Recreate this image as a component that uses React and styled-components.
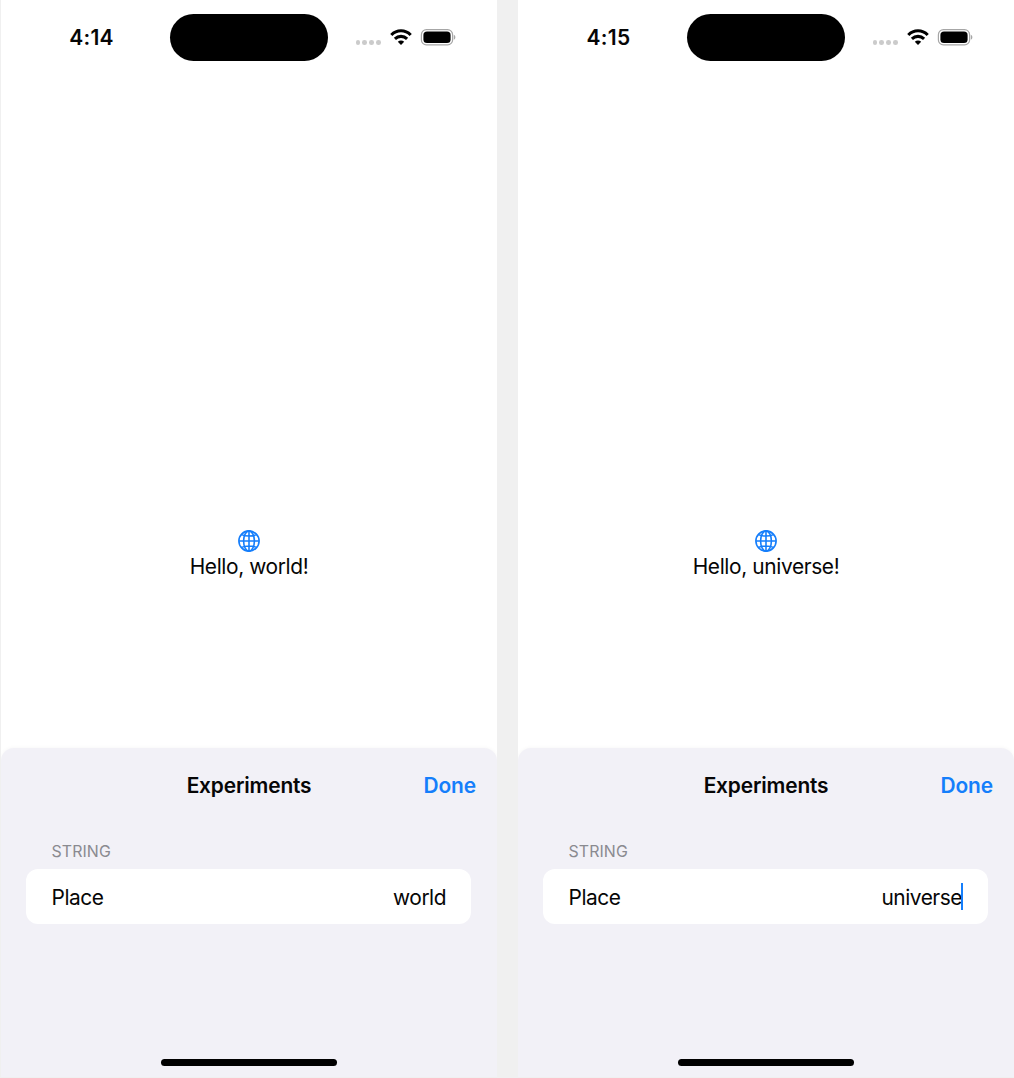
import React from "react";
import styled, { createGlobalStyle } from "styled-components";

const GlobalStyle = createGlobalStyle`
  *, *::before, *::after { box-sizing: border-box; }
  body {
    margin: 0;
    background: #f0f0f0;
    color: #060606;
    font-family: Inter, "Liberation Sans", sans-serif;
    font-size: 20.9px;
    line-height: 26px;
  }
`;

const Gallery = styled.main`
  display: flex;
  gap: 21px;
  width: 1014px;
  height: 1078px;
  padding: 0 0 1px 1px;
  overflow: hidden;
`;

const Phone = styled.section`
  display: flex;
  flex-direction: column;
  flex: 0 0 496px;
  background: #fff;
`;

const StatusBar = styled.header`
  display: grid;
  grid-template-columns: 169px 158px 169px;
  align-items: center;
  height: 75px;
`;

const Clock = styled.time`
  padding-left: 12px;
  text-align: center;
  font-size: 21px;
  font-weight: 600;
  letter-spacing: 0.25px;
`;

const Island = styled.div`
  height: 47px;
  border-radius: 24px;
  background: #000;
`;

const Indicators = styled.div`
  display: flex;
  align-items: center;
  padding: 0 0 1px 27px;
`;

const SignalDots = styled.div`
  display: flex;
  gap: 2.2px;
  margin: 11.5px 9px 0 0.5px;
`;

const Dot = styled.i`
  width: 4.7px;
  height: 4.7px;
  border-radius: 50%;
  background: #cbcbcb;
`;

const WifiGlyph = styled.svg`
  width: 22px;
  height: 16px;
  margin-right: 8px;
`;

const BatteryGlyph = styled.svg`
  width: 36px;
  height: 17px;
`;

const Greeting = styled.div`
  display: flex;
  flex: 1;
  flex-direction: column;
  align-items: center;
  padding-top: 455px;
`;

const GlobeGlyph = styled.svg`
  width: 22px;
  height: 22px;
  margin-bottom: 2px;
`;

const Message = styled.p`
  margin: 0;
  letter-spacing: -0.38px;
`;

const Sheet = styled.section`
  display: flex;
  flex-direction: column;
  height: 329px;
  border-radius: 13px 13px 0 0;
  background: #f2f1f7;
  box-shadow: 0 0 4px rgba(0, 0, 0, 0.045);
  clip-path: inset(-6px 0 0 0);
`;

const SheetHeader = styled.div`
  display: grid;
  grid-template-columns: 1fr auto 1fr;
  align-items: center;
  height: 74px;
  padding: 1px 21px 0;
`;

const Title = styled.h2`
  grid-column: 2;
  margin: 0;
  font-size: 20.9px;
  font-weight: 600;
  letter-spacing: -0.16px;
`;

const DoneButton = styled.button`
  justify-self: end;
  padding: 0;
  border: 0;
  background: none;
  color: #157efb;
  font: inherit;
  font-weight: 600;
  letter-spacing: -0.1px;
`;

const SectionLabel = styled.h3`
  margin: 20px 51px 7px 50.5px;
  color: #8a8a90;
  font-size: 15.9px;
  font-weight: 400;
  line-height: 20px;
  letter-spacing: 0.1px;
`;

const Field = styled.label`
  display: flex;
  align-items: center;
  justify-content: space-between;
  height: 55px;
  margin: 0 26px 0 25px;
  padding: 3px 25px 0 25.5px;
  border-radius: 12px;
  background: #fff;
`;

const FieldName = styled.span`
  letter-spacing: -0.45px;
`;

const FieldValue = styled.span`
  display: flex;
  align-items: center;
  letter-spacing: -0.48px;
`;

const Caret = styled.i`
  width: 2px;
  height: 27px;
  margin: -4px 0 0 -1px;
  background: #157efb;
`;

const HomeIndicator = styled.div`
  width: 176px;
  height: 7px;
  margin: auto auto 11px;
  border-radius: 4px;
  background: #000;
`;

function Wifi() {
  return (
    <WifiGlyph viewBox="0 0 22 16" fill="none" stroke="#000" strokeWidth="3.1">
      <path d="M1.3 6C6.8.4 15.2.4 20.7 6" />
      <path d="M4.9 9.8C8.4 6.5 13.6 6.5 17.1 9.8" />
      <path d="M11 16 7.8 12.8C9.6 11.1 12.4 11.1 14.2 12.8Z" fill="#000" stroke="none" />
    </WifiGlyph>
  );
}

function Battery() {
  return (
    <BatteryGlyph viewBox="0 0 36 17">
      <rect x="1.4" y=".7" width="31.2" height="15.2" rx="5" fill="none" stroke="#a6a6a6" strokeWidth="1.2" />
      <rect x="3.4" y="2.5" width="27.2" height="11.6" rx="3.6" fill="#000" />
      <path d="M33.8 5.8v5c2.1-.8 2.1-4.2 0-5Z" fill="#a6a6a6" />
    </BatteryGlyph>
  );
}

function Globe() {
  return (
    <GlobeGlyph viewBox="0 0 22 22" fill="none" stroke="#157efb" strokeWidth="1.6">
      <circle cx="11" cy="11" r="10.1" />
      <ellipse cx="11" cy="11" rx="5.4" ry="10.1" />
      <path d="M11 .9v20.2M.9 11h20.2M3.6 4.6C7.4 6.5 14.6 6.5 18.4 4.6M3.6 17.4C7.4 15.5 14.6 15.5 18.4 17.4" />
    </GlobeGlyph>
  );
}

const screens = [
  { time: "4:14", place: "world", editing: false },
  { time: "4:15", place: "universe", editing: true },
];

function Screen({ time, place, editing }) {
  return (
    <Phone>
      <StatusBar>
        <Clock>{time}</Clock>
        <Island />
        <Indicators>
          <SignalDots>
            <Dot />
            <Dot />
            <Dot />
            <Dot />
          </SignalDots>
          <Wifi />
          <Battery />
        </Indicators>
      </StatusBar>
      <Greeting>
        <Globe />
        <Message>Hello, {place}!</Message>
      </Greeting>
      <Sheet>
        <SheetHeader>
          <Title>Experiments</Title>
          <DoneButton type="button">Done</DoneButton>
        </SheetHeader>
        <SectionLabel>STRING</SectionLabel>
        <Field>
          <FieldName>Place</FieldName>
          <FieldValue>
            {place}
            {editing && <Caret />}
          </FieldValue>
        </Field>
        <HomeIndicator />
      </Sheet>
    </Phone>
  );
}

export default function App() {
  return (
    <>
      <GlobalStyle />
      <Gallery>
        {screens.map((screen) => (
          <Screen key={screen.time} {...screen} />
        ))}
      </Gallery>
    </>
  );
}
